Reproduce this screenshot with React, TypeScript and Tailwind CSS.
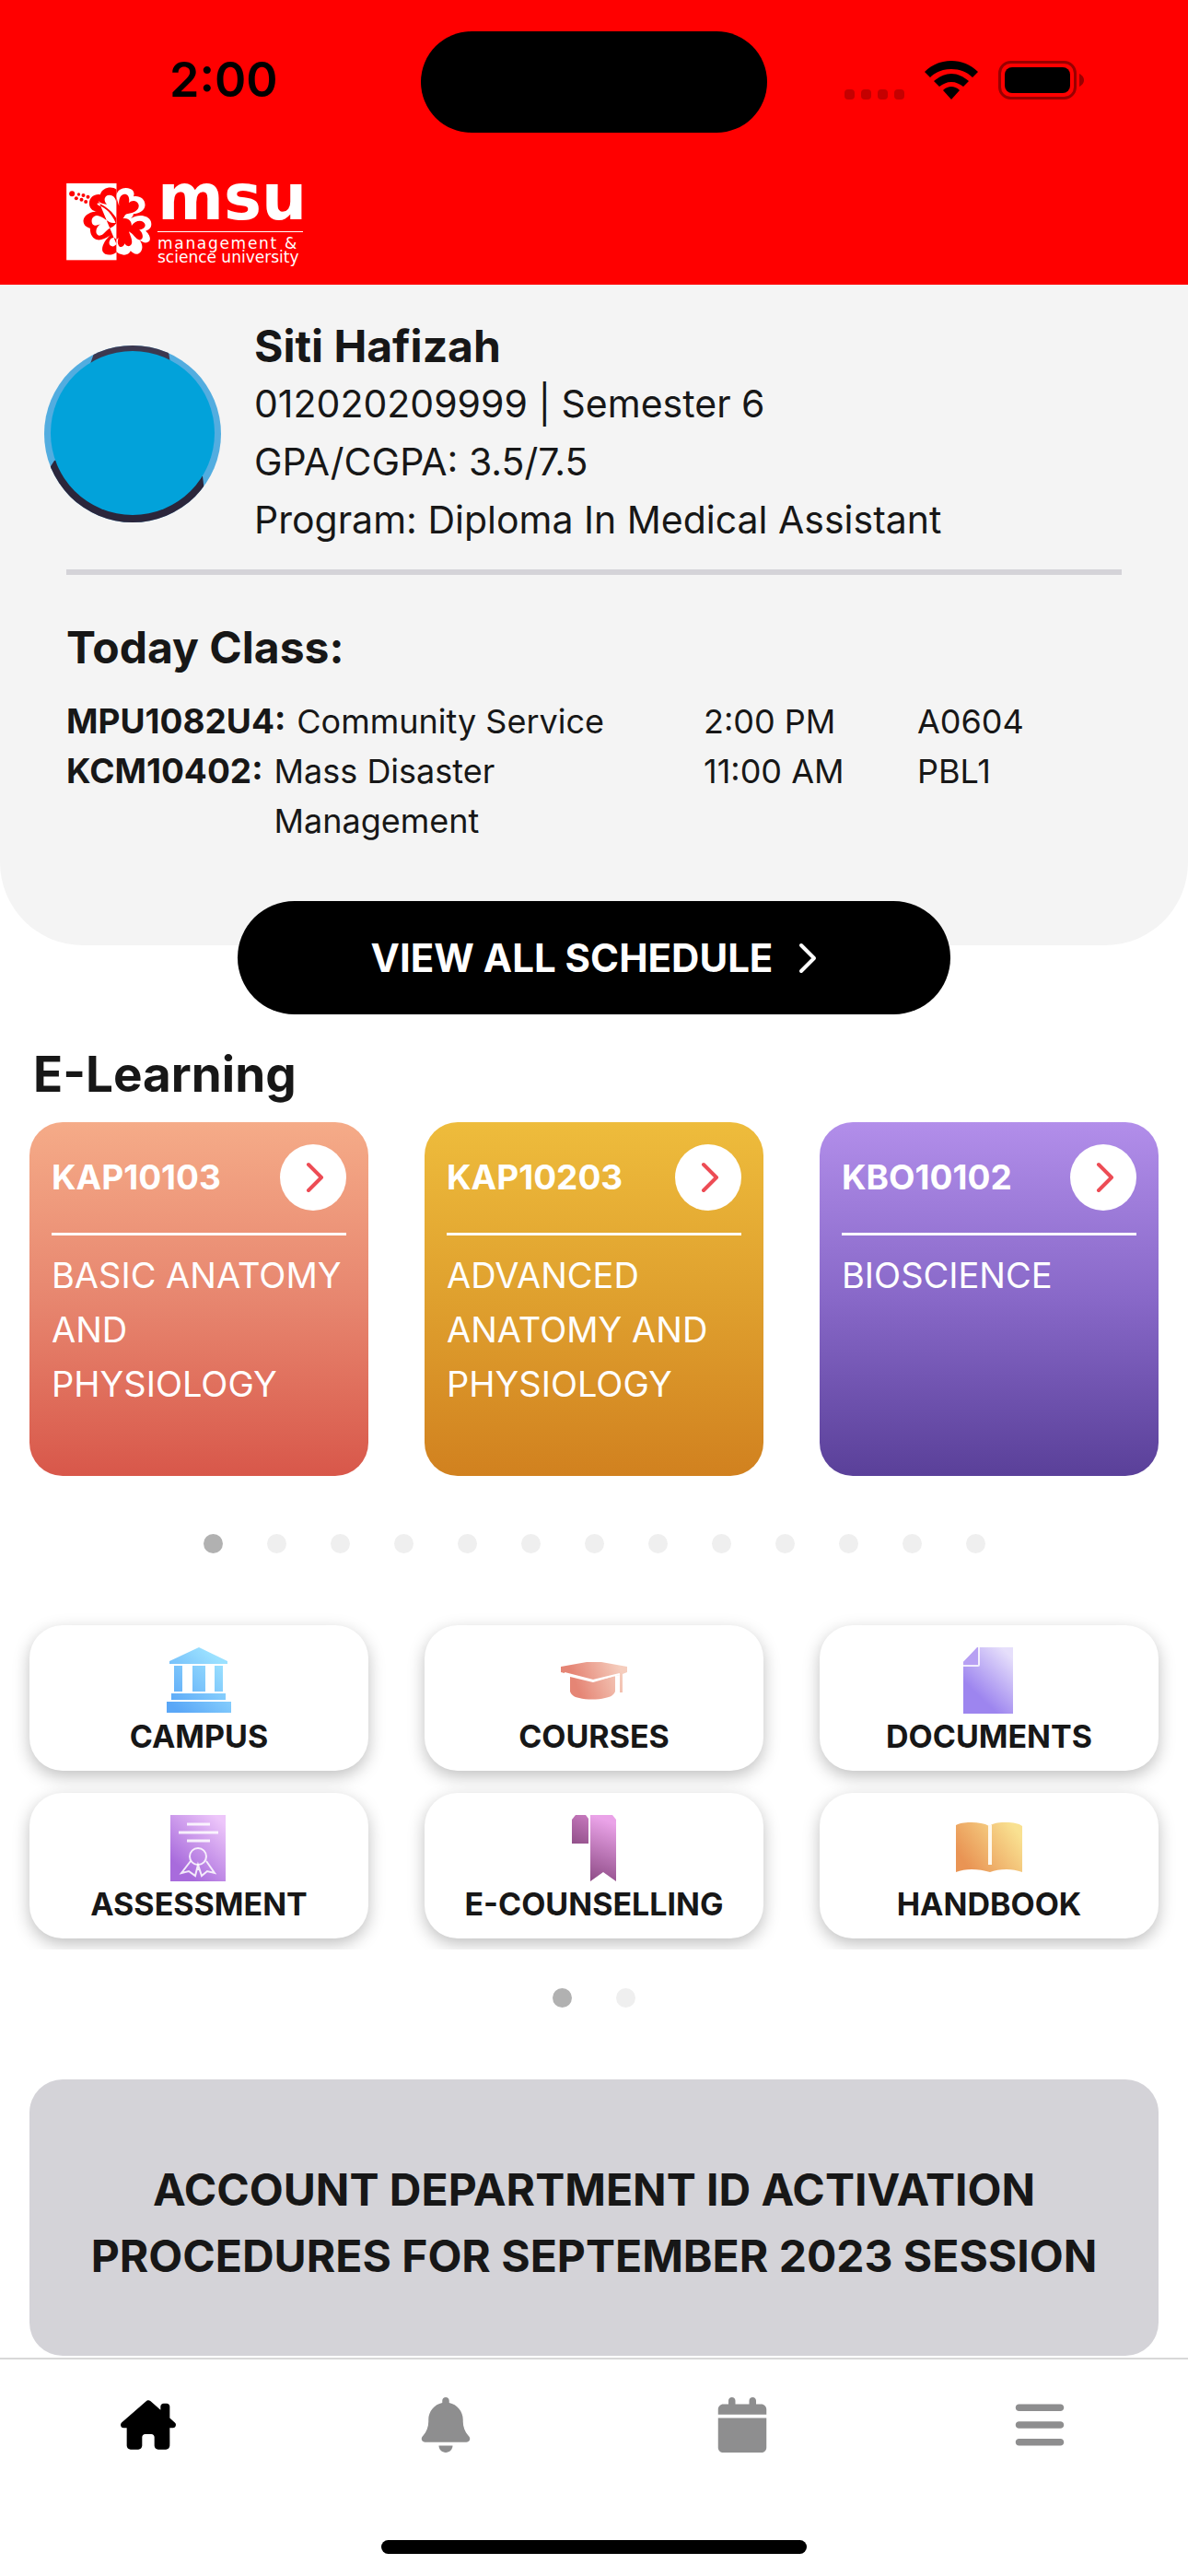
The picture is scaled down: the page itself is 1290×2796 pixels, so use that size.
import { FaBars, FaBell, FaCalendar, FaHouseChimney } from "react-icons/fa6"

const classes = [
  { code: "MPU1082U4:", name: "Community Service", time: "2:00 PM", room: "A0604" },
  { code: "KCM10402:", name: "Mass Disaster Management", time: "11:00 AM", room: "PBL1" },
]

const courses = [
  { code: "KAP10103", name: "BASIC ANATOMY AND PHYSIOLOGY", color: "from-[#f5ab88] via-[#e7866f] to-[#d8574a]" },
  { code: "KAP10203", name: "ADVANCED ANATOMY AND PHYSIOLOGY", color: "from-[#eebc3c] via-[#dfa02e] to-[#d1811f]" },
  { code: "KBO10102", name: "BIOSCIENCE", color: "from-[#b28eea] via-[#8868c8] to-[#5a4099]" },
]

function Chevron({ className }: { className: string }) {
  return (
    <svg viewBox="0 0 20 34" fill="none" className={className} aria-hidden="true">
      <path d="M3 3L17 17L3 31" stroke="currentColor" strokeWidth="4" strokeLinecap="round" strokeLinejoin="round" />
    </svg>
  )
}

function Emblem() {
  return (
    <svg viewBox="0 0 278 252" className="h-[84px] w-[93px]" aria-hidden="true">
      <rect width="163" height="250" fill="#fff" />
      <g fill="#f00">
        <circle cx="18" cy="34" r="9" />
        <circle cx="40" cy="36" r="5" />
        <circle cx="32" cy="49" r="6" />
        <circle cx="55" cy="39" r="6" />
        <circle cx="49" cy="53" r="6" />
        <circle cx="70" cy="44" r="6" />
        <circle cx="63" cy="60" r="6" />
        <path d="M163 20C148 8 116 13 110 37C91 33 70 48 75 72C79 88 94 94 109 92C86 90 58 99 55 121C55 136 64 143 77 146C77 174 93 187 111 184C126 181 135 173 144 168C127 182 112 207 118 222C125 236 148 236 163 224Z" />
      </g>
      <path
        d="M104 56C111 68 125 66 132 69C120 58 122 40 138 38C157 37 163 55 163 68V115C151 94 133 77 106 65C98 64 99 69 105 72C132 81 149 103 160 128C138 135 125 109 101 105C88 104 78 117 84 131C90 141 103 136 110 133C94 145 92 166 106 170C121 171 129 149 147 143C155 140 159 134 163 130V184C151 164 132 190 142 202C151 209 159 203 163 198Z"
        fill="#fff"
      />
      <path
        d="M163 38C166 18 190 10 208 18C223 24 221 38 218 43C239 39 257 52 256 72C254 91 235 98 218 100C218 107 213 111 210 114C234 99 267 103 275 124C281 145 267 152 258 155C274 169 278 189 262 193C253 195 246 189 239 186C250 201 250 219 235 229C225 234 215 226 209 220C205 231 190 236 179 231C170 229 166 226 163 222Z"
        fill="#fff"
      />
      <path
        d="M163 184V43C166 64 176 79 174 93C169 68 168 39 188 35C202 34 207 48 203 64C214 53 230 56 235 69C239 86 221 97 200 99C190 100 190 107 184 115C204 111 213 127 212 138C224 120 247 117 255 131C261 143 247 151 237 151C248 160 253 178 242 184C228 187 219 164 203 157C210 175 221 196 205 204C198 206 192 201 190 196C186 209 172 211 169 200C165 193 168 187 169 177Z"
        fill="#f00"
      />
    </svg>
  )
}

function Logo() {
  return (
    <div className="flex items-start gap-1.5 font-['DejaVu_Sans',sans-serif] text-white">
      <div className="mt-0.5">
        <Emblem />
      </div>
      <div className="w-[158px]">
        <div className="h-[50px] text-[69px] leading-[34px] font-bold">msu</div>
        <div className="mt-1 h-px bg-white" />
        <div className="mt-1 text-[17px] leading-[17px] tracking-widest whitespace-nowrap">management &amp;</div>
        <div className="text-[17px] leading-[12px] whitespace-nowrap">science university</div>
      </div>
    </div>
  )
}

function StatusBar() {
  return (
    <div className="grid grid-cols-3 items-center px-12">
      <div className="pb-1 pl-[136px] text-[52px] leading-[60px] font-semibold text-black">2:00</div>
      <div className="mx-auto h-[110px] w-[376px] rounded-full bg-black" />
      <div className="flex items-center justify-end gap-[22px] pr-16 pb-1">
        <svg viewBox="0 0 66 42" className="h-[42px] w-[66px]" fill="#c50000" aria-hidden="true">
          <rect x="1" y="31" width="11" height="11" rx="4" />
          <rect x="19" y="31" width="11" height="11" rx="4" />
          <rect x="37" y="31" width="11" height="11" rx="4" />
          <rect x="55" y="31" width="11" height="11" rx="4" />
        </svg>
        <svg viewBox="0 0 58 42" className="h-[42px] w-[58px]" aria-hidden="true">
          <path d="M29 0C18 0 8 4 0 12L6 18C12 12 20 9 29 9S46 12 52 18L58 12C50 4 40 0 29 0Z" />
          <path d="M29 14C22 14 16 17 10 22L16 28C20 25 24 23 29 23S38 25 42 28L48 22C42 17 36 14 29 14Z" />
          <path d="M29 28C26 28 23 29 20 32L29 42L38 32C35 29 32 28 29 28Z" />
        </svg>
        <svg viewBox="0 0 94 42" className="h-[42px] w-[94px]" aria-hidden="true">
          <rect x="1.5" y="1.5" width="82" height="39" rx="12" fill="none" stroke="#990000" strokeWidth="3" />
          <rect x="7" y="7" width="71" height="28" rx="8" />
          <path d="M88 14C92 16 93 19 93 21S92 26 88 28Z" fill="#990000" />
        </svg>
      </div>
    </div>
  )
}

function Avatar() {
  return (
    <svg viewBox="0 0 192 192" className="size-48 shrink-0" role="img" aria-label="Siti Hafizah">
      <defs>
        <clipPath id="avatar">
          <circle cx="96" cy="96" r="96" />
        </clipPath>
      </defs>
      <g clipPath="url(#avatar)">
        <rect width="192" height="192" fill="#52ade0" />
        <path d="M57 0H134L137 20L96 60L50 20Z" fill="#3c384f" />
        <path d="M11 125L96 96L172 142L178 192H0V142Z" fill="#2b263b" />
      </g>
      <circle cx="96" cy="95" r="89" fill="#02a2da" />
    </svg>
  )
}

function Dots({ count }: { count: number }) {
  return (
    <div className="flex justify-center gap-12">
      {Array.from({ length: count }, (_, i) => (
        <button
          key={i}
          aria-label={`Page ${i + 1}`}
          className={i === 0 ? "size-[21px] rounded-full bg-[#b1b1b1]" : "size-[21px] rounded-full bg-[#efefef]"}
        />
      ))}
    </div>
  )
}

function CampusIcon() {
  return (
    <svg viewBox="0 0 72 72" className="size-[72px]" aria-hidden="true">
      <defs>
        <linearGradient id="campus" x1="10" y1="66" x2="58" y2="14" gradientUnits="userSpaceOnUse">
          <stop stopColor="#5aa7f7" />
          <stop offset="1" stopColor="#9be1ff" />
        </linearGradient>
      </defs>
      <path
        d="M36 0L67 15V18H4V15ZM9 20H18V48H9ZM29 20H43V48H29ZM53 20H62V48H53ZM6 50H65V57H6ZM1 59H71V71H1Z"
        fill="url(#campus)"
      />
    </svg>
  )
}

function CoursesIcon() {
  return (
    <svg viewBox="0 0 72 72" className="size-[72px]" aria-hidden="true">
      <defs>
        <linearGradient id="courses" x1="18" y1="44" x2="66" y2="26" gradientUnits="userSpaceOnUse">
          <stop stopColor="#e58575" />
          <stop offset="1" stopColor="#f5cdbd" />
        </linearGradient>
      </defs>
      <path
        d="M0 21L28 16H44L72 21V27L67 29V49H64V30L35 36L0 27ZM10 32L35 38L59 31V48C57 52 54 54 48 55C40 57 28 57 20 55C14 54 11 51 10 48Z"
        fill="url(#courses)"
      />
      <path d="M4 28L35 36L64 29" stroke="#fff" strokeWidth="2" fill="none" />
    </svg>
  )
}

function DocumentsIcon() {
  return (
    <svg viewBox="0 0 72 72" className="size-[72px]" aria-hidden="true">
      <defs>
        <linearGradient id="documents" x1="22" y1="50" x2="60" y2="10" gradientUnits="userSpaceOnUse">
          <stop stopColor="#9d85ef" />
          <stop offset="1" stopColor="#e6dffb" />
        </linearGradient>
      </defs>
      <path d="M24 0H62V72H8V16Z" fill="url(#documents)" />
      <path d="M24 0V20H8V16L23 0Z" fill="#b7a0f3" />
      <path d="M25 0V19Q25 20 24 20H8" fill="none" stroke="#fff" strokeOpacity="0.8" strokeWidth="2" />
    </svg>
  )
}

function AssessmentIcon() {
  return (
    <svg viewBox="0 0 72 72" className="size-[72px]" aria-hidden="true">
      <defs>
        <linearGradient id="assessment" x1="14" y1="56" x2="60" y2="6" gradientUnits="userSpaceOnUse">
          <stop stopColor="#a86bdc" />
          <stop offset="1" stopColor="#edc6fa" />
        </linearGradient>
      </defs>
      <rect x="5" width="60" height="72" fill="url(#assessment)" />
      <g fill="none" stroke="#fff" strokeOpacity="0.85" strokeWidth="2">
        <path d="M23 10H48M14 19H57M23 28H48" strokeWidth="3" />
        <circle cx="35" cy="45" r="9" />
        <path d="M27 50L17 63L25 61L32 66L35 54L39 66L45 61L53 63L44 50M35 54V60" />
      </g>
    </svg>
  )
}

function CounsellingIcon() {
  return (
    <svg viewBox="0 0 72 72" className="size-[72px]" aria-hidden="true">
      <defs>
        <linearGradient id="counselling" x1="20" y1="68" x2="44" y2="4" gradientUnits="userSpaceOnUse">
          <stop stopColor="#8d4a85" />
          <stop offset="1" stopColor="#eaa3e8" />
        </linearGradient>
        <linearGradient id="fold" x1="14" y1="30" x2="28" y2="0" gradientUnits="userSpaceOnUse">
          <stop stopColor="#94528c" />
          <stop offset="1" stopColor="#c678bd" />
        </linearGradient>
      </defs>
      <path d="M16 0H27L30 4V31H12V5Z" fill="url(#fold)" />
      <path d="M32 0H56L60 5V72L46 62L32 72Z" fill="url(#counselling)" />
    </svg>
  )
}

function HandbookIcon() {
  return (
    <svg viewBox="0 0 72 72" className="size-[72px]" aria-hidden="true">
      <defs>
        <linearGradient id="handbook" x1="10" y1="52" x2="64" y2="14" gradientUnits="userSpaceOnUse">
          <stop stopColor="#e99454" />
          <stop offset="1" stopColor="#f9e191" />
        </linearGradient>
      </defs>
      <path
        d="M0 11C6 8 12 8 17 8C24 8 31 9 36 12C42 8 48 8 55 8C62 8 68 9 72 12V62C66 60 61 59 55 59C48 59 42 60 37 62C30 60 24 59 17 59C11 59 5 60 0 62Z"
        fill="url(#handbook)"
      />
      <path d="M37 11V54" stroke="#fff8ec" strokeWidth="4" />
    </svg>
  )
}

const menu = [
  { label: "CAMPUS", icon: CampusIcon },
  { label: "COURSES", icon: CoursesIcon },
  { label: "DOCUMENTS", icon: DocumentsIcon },
  { label: "ASSESSMENT", icon: AssessmentIcon },
  { label: "E-COUNSELLING", icon: CounsellingIcon },
  { label: "HANDBOOK", icon: HandbookIcon },
]

export default function App() {
  return (
    <div className="flex min-h-screen flex-col bg-white font-['Inter',sans-serif] text-[#171717]">
      <header className="bg-[#ff0000] pt-[34px] pb-6">
        <StatusBar />
        <div className="mt-[53px] px-[72px]">
          <Logo />
        </div>
      </header>

      <section className="rounded-b-[90px] bg-[#f4f4f4] px-[72px] pt-9">
        <div className="-ml-6 flex items-center gap-9">
          <Avatar />
          <div className="text-[41px] leading-[63px]">
            <h1 className="text-[48px] leading-[62px] font-bold">Siti Hafizah</h1>
            <p>012020209999 | Semester 6</p>
            <p>GPA/CGPA: 3.5/7.5</p>
            <p>Program: Diploma In Medical Assistant</p>
          </div>
        </div>
        <hr className="mt-[22px] border-t-[6px] border-[#d4d3d8]" />

        <h2 className="mt-12 text-[48px] leading-[62px] font-bold">Today Class:</h2>
        <table className="mt-[22px] w-full table-fixed text-left text-[36px] leading-[54px]">
          <colgroup>
            <col className="w-[692px]" />
            <col className="w-[232px]" />
            <col />
          </colgroup>
          <tbody>
            {classes.map((c) => (
              <tr key={c.code} className="align-top">
                <th scope="row" className="flex gap-3 pr-24 font-normal">
                  <span className="text-[37px] font-bold">{c.code}</span>
                  <span>{c.name}</span>
                </th>
                <td>{c.time}</td>
                <td>{c.room}</td>
              </tr>
            ))}
          </tbody>
        </table>
        <button className="mx-auto mt-[60px] -mb-[75px] flex h-[123px] w-[774px] items-center justify-center gap-7 rounded-full bg-black text-[42px] font-bold text-white">
          VIEW ALL SCHEDULE
          <Chevron className="h-[34px] w-5" />
        </button>
      </section>

      <main className="px-8 pt-[108px]">
        <h2 className="pl-1 text-[53px] leading-[64px] font-bold">E-Learning</h2>
        <div className="mt-5 grid grid-cols-3 gap-[61px]">
          {courses.map((c) => (
            <article key={c.code} className={`h-[384px] rounded-[36px] bg-gradient-to-b px-6 pt-6 text-white ${c.color}`}>
              <div className="flex h-[72px] items-center justify-between">
                <h3 className="text-[37px] font-bold">{c.code}</h3>
                <button aria-label={`Open ${c.code}`} className="flex size-[72px] items-center justify-center rounded-full bg-white pl-1 text-[#ed4c55]">
                  <Chevron className="h-[34px] w-5" />
                </button>
              </div>
              <hr className="mt-6 border-t-[3px] border-white" />
              <p className="mt-3.5 text-[38px] leading-[59px]">{c.name}</p>
            </article>
          ))}
        </div>
        <div className="mt-[63px]">
          <Dots count={13} />
        </div>

        <nav className="-mx-8 mt-[54px] grid grid-cols-3 gap-x-[61px] gap-y-6 overflow-hidden px-8 pt-6 pb-3">
          {menu.map(({ label, icon: Icon }) => (
            <a
              key={label}
              href="#"
              className="flex h-[158px] flex-col items-center rounded-[36px] bg-white pt-6 text-[34px] leading-[50px] font-bold shadow-[0_6px_18px_rgba(0,0,0,0.25)]">
              <Icon />
              {label}
            </a>
          ))}
        </nav>
        <div className="mt-[42px]">
          <Dots count={2} />
        </div>

        <a
          href="#"
          className="mt-[78px] flex h-[300px] items-center justify-center rounded-[36px] bg-[#d4d3d8] px-12 pt-3 text-center text-[48px] leading-[72px] font-bold">
          ACCOUNT DEPARTMENT ID ACTIVATION
          <br />
          PROCEDURES FOR SEPTEMBER 2023 SESSION
        </a>
      </main>

      <footer className="mt-0.5 flex grow flex-col justify-between border-t-2 border-[#d8d8d8] pb-6">
        <nav className="grid grid-cols-4 pt-[38px] text-[60px] text-[#8e8e8f]">
          <a href="#" aria-label="Home" className="flex h-[66px] items-center justify-center text-black">
            <FaHouseChimney />
          </a>
          <a href="#" aria-label="Notifications" className="flex h-[66px] items-center justify-center">
            <FaBell />
          </a>
          <a href="#" aria-label="Calendar" className="flex h-[66px] items-center justify-center">
            <FaCalendar />
          </a>
          <a href="#" aria-label="Menu" className="flex h-[66px] items-center justify-center">
            <FaBars />
          </a>
        </nav>
        <div className="mx-auto h-[15px] w-[462px] rounded-full bg-black" />
      </footer>
    </div>
  )
}
